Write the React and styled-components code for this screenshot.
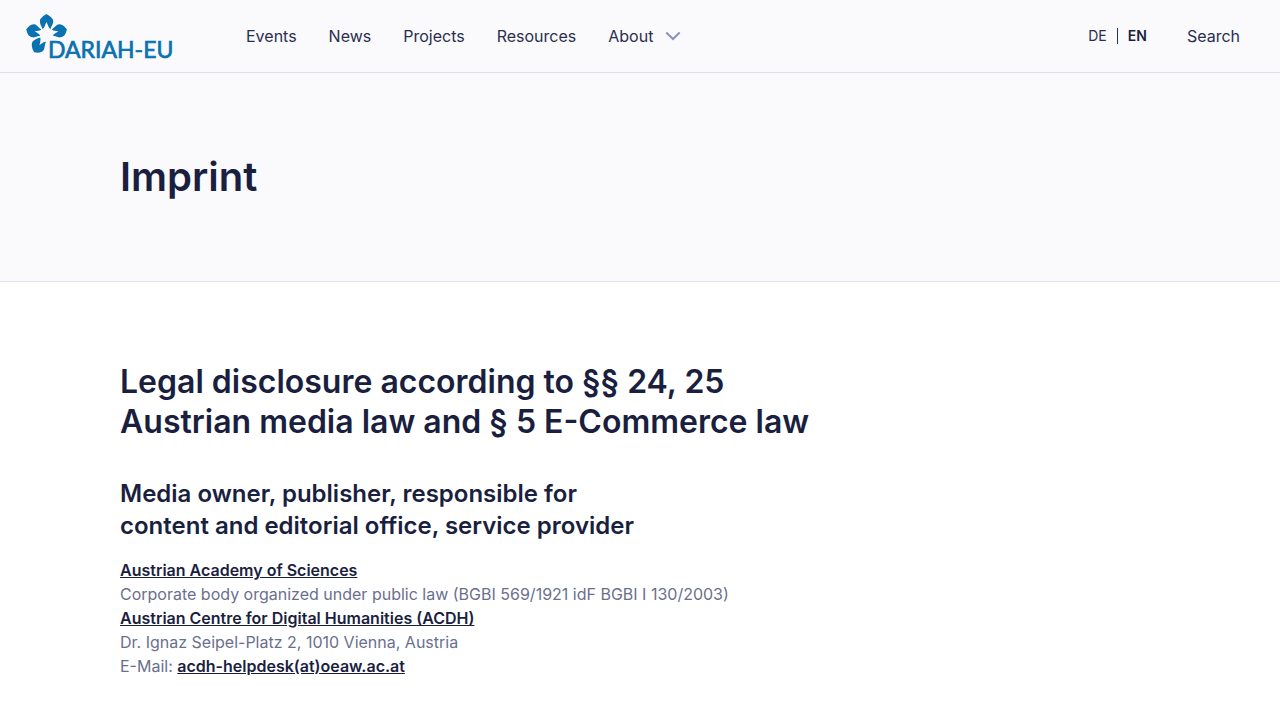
import React from "react";
import styled, { createGlobalStyle } from "styled-components";

const GlobalStyle = createGlobalStyle`
  *, *::before, *::after { box-sizing: border-box; }
  body {
    margin: 0;
    background: #ffffff;
    color: #1b1f3f;
    font-family: Inter, "Liberation Sans", sans-serif;
    font-size: 16px;
    font-weight: 400;
    line-height: 24px;
    -webkit-font-smoothing: antialiased;
  }
`;

const Header = styled.header`
  display: flex;
  align-items: center;
  padding: 0 40px 0 24px;
  min-height: 73px;
  background: #fafafc;
  border-bottom: 1px solid #e0e0ec;
`;

const LogoLink = styled.a`
  display: block;
  flex: none;
  margin-right: 70px;
  line-height: 0;
`;

const Nav = styled.nav`
  flex: 1;
`;

const NavList = styled.ul`
  display: flex;
  gap: 32px;
  margin: 0;
  padding: 0;
  list-style: none;
`;

const NavLink = styled.a`
  color: #2a2e4e;
  text-decoration: none;
`;

const MenuButton = styled.button`
  display: flex;
  align-items: center;
  gap: 12px;
  padding: 0;
  border: 0;
  background: none;
  color: #2a2e4e;
  font: inherit;
  cursor: pointer;
`;

const Languages = styled.div`
  display: flex;
  align-items: center;
  gap: 10px;
  margin-right: 40px;
  font-size: 14px;
`;

const LanguageLink = styled.a`
  color: ${(p) => (p.$current ? "#1b1f3f" : "#2a2e4e")};
  font-weight: ${(p) => (p.$current ? 600 : 400)};
  text-decoration: none;
`;

const Divider = styled.span`
  width: 1px;
  height: 16px;
  background: #2a2e4e;
`;

const Hero = styled.section`
  padding: 80px 120px;
  background: #fafafc;
  border-bottom: 1px solid #e4e4f0;
`;

const Title = styled.h1`
  margin: 0;
  font-size: 40px;
  font-weight: 600;
  line-height: 48px;
`;

const Content = styled.section`
  padding: 80px 120px 40px;
`;

const SectionTitle = styled.h2`
  max-width: 720px;
  margin: 0 0 36px;
  font-size: 32px;
  font-weight: 600;
  line-height: 40px;
`;

const SubTitle = styled.h3`
  max-width: 720px;
  margin: 0 0 16px;
  font-size: 24px;
  font-weight: 600;
  line-height: 32px;
`;

const Paragraph = styled.p`
  margin: 0;
  color: #6b6f8e;
`;

const TextLink = styled.a`
  color: #1b1f3f;
  font-weight: 600;
  text-decoration: underline;
`;

const LogoText = styled.text`
  font-family: Lato, "Open Sans", sans-serif;
  font-size: 23px;
  font-weight: 400;
  stroke: #0a72b0;
  stroke-width: 0.7px;
`;

const Logo = () => (
  <svg width="152" height="56" viewBox="24 8 152 56" fill="#0a72b0" role="img" aria-label="DARIAH-EU">
    <path d="M46.5 14C49.5 16 53.3 18.2 53.2 21.2C53.2 24.5 51 26.3 50.3 29.3C48.3 27.7 48 24.5 46.5 22C45 24.5 44.8 27.7 42.7 29.3C41.8 26.3 39.9 24.5 39.9 21.2C39.9 18.2 43.5 16 46.5 14Z" />
    <path d="M26.2 29.2C28.5 26.5 31 23.8 34.2 24.3C37.3 24.8 38.5 27.8 41.3 29.5C39.5 31.2 36.8 30.8 34.7 31.2C36.6 32.5 39.2 33.5 40.3 35.8C37.5 36 35.5 37.8 32.8 37.3C27.8 36.5 27.3 33 26.2 29.2Z" />
    <path d="M66.9 29.2C64.6 26.5 62.1 23.8 58.9 24.3C55.8 24.8 54.5 27.8 51.8 29.5C53.6 31.2 56.3 30.8 58.4 31.2C56.5 32.5 54 33.5 52.8 35.8C55.6 36 57.6 37.8 60.3 37.3C65.3 36.5 65.8 33 66.9 29.2Z" />
    <path d="M40.2 37.6C36.3 38.8 31.8 40.5 31.8 44.5C31.8 48 33 50.3 34.2 52.2C37.5 52.9 41.5 53 43.3 50.6C45.5 47.5 44 44.7 46.3 41.8C43.6 41.5 41.6 43.6 39.5 45.3C40 42.6 41 40 40.2 37.6Z" />
    <LogoText x="48" y="58">DARIAH-EU</LogoText>
  </svg>
);

const Chevron = () => (
  <svg width="16" height="10" viewBox="0 0 16 10" fill="none" stroke="#8d91b8" strokeWidth="2" aria-hidden="true">
    <path d="M1.3 1.5L8 8L14.7 1.5" />
  </svg>
);

const navItems = ["Events", "News", "Projects", "Resources"];

export default function App() {
  return (
    <>
      <GlobalStyle />
      <Header>
        <LogoLink href="#home"><Logo /></LogoLink>
        <Nav aria-label="Main">
          <NavList>
            {navItems.map((item) => (
              <li key={item}><NavLink href={`#${item.toLowerCase()}`}>{item}</NavLink></li>
            ))}
            <li><MenuButton type="button" aria-haspopup="menu">About<Chevron /></MenuButton></li>
          </NavList>
        </Nav>
        <Languages>
          <LanguageLink href="#de">DE</LanguageLink>
          <Divider />
          <LanguageLink href="#en" $current aria-current="true">EN</LanguageLink>
        </Languages>
        <NavLink href="#search">Search</NavLink>
      </Header>
      <main>
        <Hero><Title>Imprint</Title></Hero>
        <Content>
          <SectionTitle>Legal disclosure according to §§ 24, 25 Austrian media law and § 5 E-Commerce law</SectionTitle>
          <SubTitle>Media owner, publisher, responsible for<br />content and editorial office, service provider</SubTitle>
          <Paragraph>
            <TextLink href="#oeaw">Austrian Academy of Sciences</TextLink><br />
            Corporate body organized under public law (BGBI 569/1921 idF BGBI I 130/2003)<br />
            <TextLink href="#acdh">Austrian Centre for Digital Humanities (ACDH)</TextLink><br />
            Dr. Ignaz Seipel-Platz 2, 1010 Vienna, Austria<br />
            E-Mail: <TextLink href="#mail">acdh-helpdesk(at)oeaw.ac.at</TextLink>
          </Paragraph>
        </Content>
      </main>
    </>
  );
}
